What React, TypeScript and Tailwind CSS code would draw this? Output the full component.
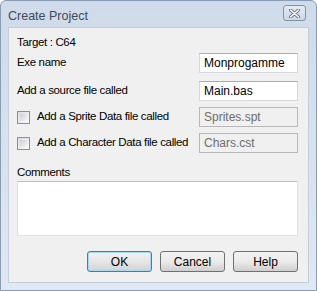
import React from 'react';

const font = { fontFamily: '"Liberation Sans", Arial, sans-serif' };

const TextBox: React.FC<{ value: string; disabled?: boolean }> = ({ value, disabled }) => (
  <div
    className={
      'w-[99px] h-[20px] shrink-0 flex items-center px-[4px] text-[12px] tracking-normal border ' +
      (disabled
        ? 'bg-[#f0f0f0] border-[#b8b8b8] text-[#6d6d6d]'
        : 'bg-white border-[#d6d8dd] border-t-[#abadb3] text-black')
    }
  >
    {value}
  </div>
);

const CheckBox: React.FC = () => (
  <div className="w-[13px] h-[13px] shrink-0 border border-[#8e8f8f] bg-gradient-to-br from-[#dcdcdc] to-[#fbfbfb] p-[2px]">
    <div className="w-full h-full bg-gradient-to-br from-[#cbcfd5] to-[#f6f6f6]" />
  </div>
);

const Button: React.FC<{ label: string; primary?: boolean }> = ({ label, primary }) => (
  <div
    className={
      'w-[65px] h-[21px] rounded-[3px] border flex items-center justify-center text-[12px] tracking-normal text-black ' +
      (primary
        ? 'border-[#3c7fb1] shadow-[inset_0_0_0_1px_#a8d8f2] bg-gradient-to-b from-[#f2f2f2] via-[#e6e6e6] to-[#d2d2d2]'
        : 'border-[#707070] bg-gradient-to-b from-[#f2f2f2] via-[#ebebeb] to-[#cfcfcf]')
    }
  >
    {label}
  </div>
);

export default function App() {
  return (
    <div
      className="w-[317px] h-[291px] flex flex-col bg-gradient-to-b from-[#cfdbea] to-[#dfe8f3] border border-[#8a9cb3] rounded-t-[6px] overflow-hidden"
      style={font}
    >
      {/* title bar */}
      <div className="h-[26px] flex items-start pl-[7px] pr-[10px] pt-[4px] shrink-0">
        <span className="text-[12.5px] text-[#3b4a5c] mt-[2px]">Create Project</span>
        <div className="ml-auto w-[23px] h-[16px] rounded-[3px] border border-[#8394a9] bg-gradient-to-b from-[#e4ebf4] to-[#cbd6e4] flex items-center justify-center">
          <svg width="11" height="9" viewBox="0 0 11 9">
            <path d="M1.5 1 L9.5 8 M9.5 1 L1.5 8" stroke="#5f6f83" strokeWidth="3.2" strokeLinecap="round" />
            <path d="M1.5 1 L9.5 8 M9.5 1 L1.5 8" stroke="#ffffff" strokeWidth="1.6" strokeLinecap="round" />
          </svg>
        </div>
      </div>

      {/* client area */}
      <div className="flex-1 mx-[7px] mb-[7px] bg-[#f0f0f0] border border-[#c2cedc] pl-[8px] pr-[10px] pt-[7px] flex flex-col text-[11.5px] tracking-[-0.35px] text-black whitespace-nowrap">
        <div className="h-[14px] leading-[14px]">Target : C64</div>

        <div className="mt-[4px] flex items-center justify-between">
          <span>Exe name</span>
          <TextBox value="Monprogamme" />
        </div>
        <div className="mt-[8px] flex items-center justify-between">
          <span>Add a source file called</span>
          <TextBox value="Main.bas" />
        </div>
        <div className="mt-[6px] flex items-center justify-between">
          <div className="flex items-center gap-[7px]">
            <CheckBox />
            <span>Add a Sprite Data file called</span>
          </div>
          <TextBox value="Sprites.spt" disabled />
        </div>
        <div className="mt-[6px] flex items-center justify-between">
          <div className="flex items-center gap-[7px]">
            <CheckBox />
            <span>Add a Character Data file called</span>
          </div>
          <TextBox value="Chars.cst" disabled />
        </div>

        <div className="mt-[12px] h-[14px] leading-[14px]">Comments</div>
        <div className="mt-[2px] h-[55px] bg-white border border-[#e2e2e2] border-t-[#c0c0c0]" />

        <div className="mt-[15px] flex justify-end gap-[8px]">
          <Button label="OK" primary />
          <Button label="Cancel" />
          <Button label="Help" />
        </div>
      </div>
    </div>
  );
}
